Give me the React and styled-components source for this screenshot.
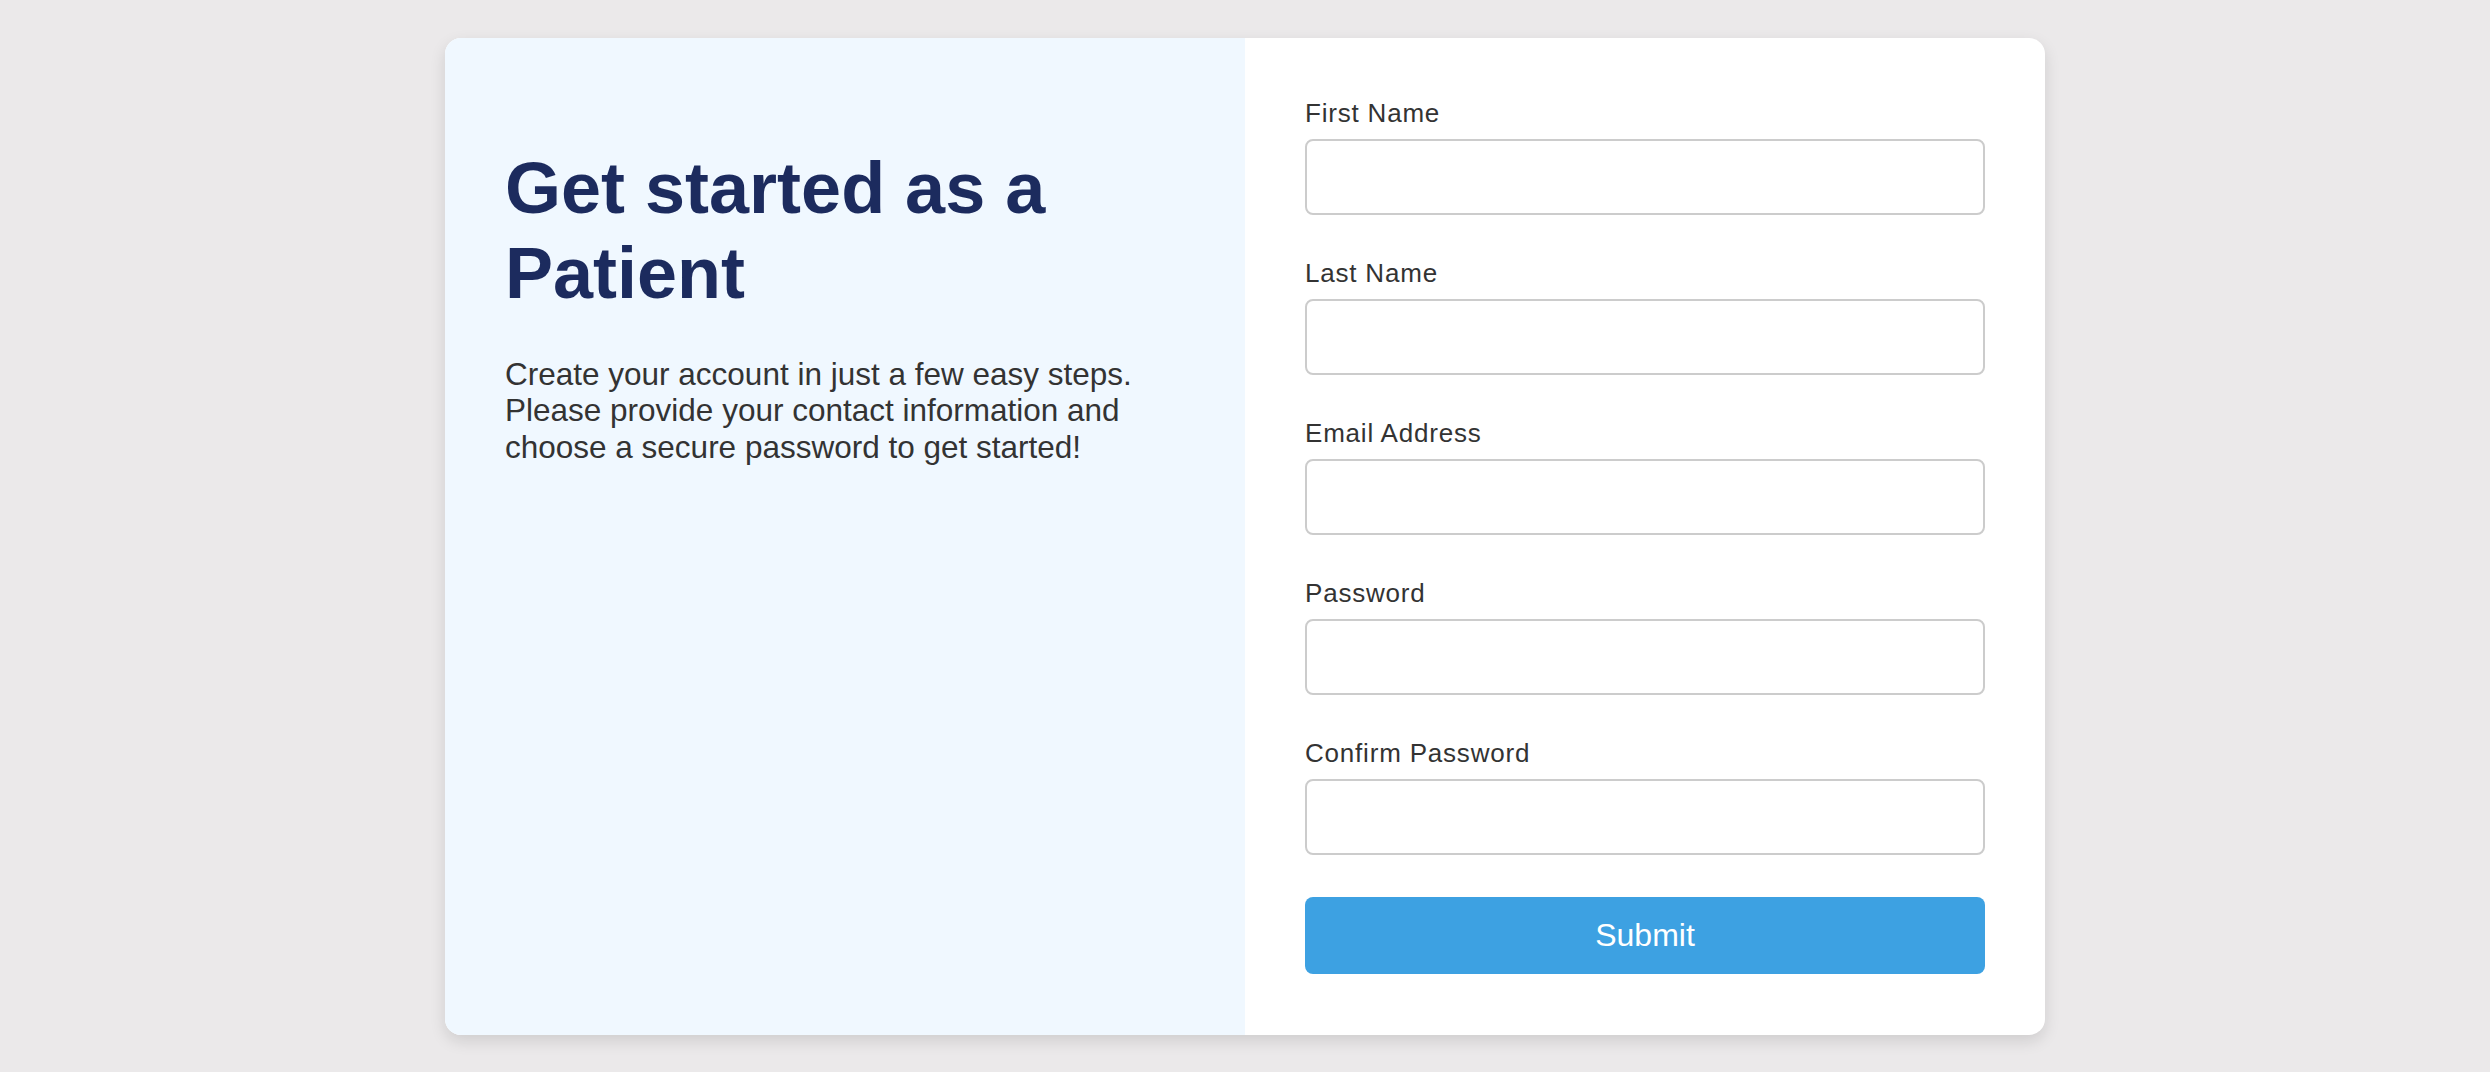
import React from 'react'
import styled, { createGlobalStyle } from 'styled-components'

const GlobalStyle = createGlobalStyle`
    * {
        box-sizing: border-box;
    }

    body {
        margin: 0;
        background-color: #ebe9ea;
        font-family: "Liberation Sans", Arial, sans-serif;
    }
`

const Page = styled.div`
    min-height: 100vh;
    display: flex;
    align-items: center;
    justify-content: center;
`

const Card = styled.div`
    width: 1600px;
    display: grid;
    grid-template-columns: 1fr 1fr;
    background-color: #ffffff;
    border-radius: 16px;

    // keeps the blue panel inside the rounded corners
    overflow: hidden;
    box-shadow: 0 6px 16px rgba(0, 0, 0, 0.12);
`

const InfoPanel = styled.div`
    background-color: #f0f8ff;
    padding: 60px;
`

const Title = styled.h1`
    margin: 48px 0 40px;
    font-size: 72px;
    line-height: 85px;
    font-weight: 700;
    color: #1c2b5e;
`

const Desc = styled.p`
    margin: 0;
    font-size: 31.5px;
    line-height: 36.7px;
    color: #333333;
`

const FormPanel = styled.form`
    padding: 60px 60px 61px;
    display: flex;
    flex-direction: column;
`

const Field = styled.div`
    display: flex;
    flex-direction: column;
    margin-bottom: 43px;

    &:last-of-type {
        margin-bottom: 42px;
    }
`

const Label = styled.label`
    font-size: 26px;
    line-height: 30px;
    letter-spacing: 0.8px;
    color: #333333;
    margin-bottom: 11px;
`

const Input = styled.input`
    height: 76px;
    width: 100%;
    border: 2px solid #cccccc;
    border-radius: 8px;
    background-color: #ffffff;
    padding: 0 16px;
    font-family: inherit;
    font-size: 26px;
    outline: none;
`

const Btn = styled.button`
    height: 77px;
    width: 100%;
    border: none;
    border-radius: 8px;
    background-color: #3da1e2;
    color: #ffffff;
    font-family: inherit;
    font-size: 32px;
    cursor: pointer;
`

const fields = [
    { id: 'firstName', label: 'First Name', type: 'text' },
    { id: 'lastName', label: 'Last Name', type: 'text' },
    { id: 'email', label: 'Email Address', type: 'email' },
    { id: 'password', label: 'Password', type: 'password' },
    { id: 'confirmPassword', label: 'Confirm Password', type: 'password' },
]

function App() {
  return (
    <>
      <GlobalStyle />
      <Page>
        <Card>
          <InfoPanel>
            <Title>Get started as a Patient</Title>
            <Desc>
              Create your account in just a few easy steps. Please provide your contact information and choose a secure password to get started!
            </Desc>
          </InfoPanel>

          <FormPanel onSubmit={(e) => e.preventDefault()}>
            {fields.map((f) => (
              <Field key={f.id}>
                <Label htmlFor={f.id}>{f.label}</Label>
                <Input id={f.id} type={f.type} />
              </Field>
            ))}
            <Btn type="submit">Submit</Btn>
          </FormPanel>
        </Card>
      </Page>
    </>
  )
}

export default App
